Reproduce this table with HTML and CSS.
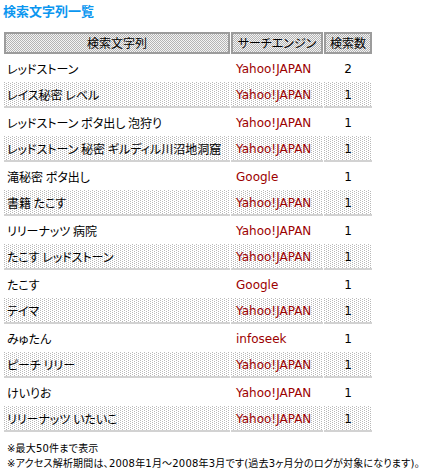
FILE: index.html
```html
<!DOCTYPE html>
<html lang="ja">
<head>
<meta charset="utf-8">
<title>検索文字列一覧</title>
<link rel="stylesheet" href="styles.css">
</head>
<body>
<h1 class="title">検索文字列一覧</h1>
<table class="kw">
  <colgroup>
    <col class="c-word"><col class="c-engine"><col class="c-count">
  </colgroup>
  <thead>
    <tr><th>検索文字列</th><th>サーチエンジン</th><th>検索数</th></tr>
  </thead>
  <tbody>
    <tr><td class="word">レッドストーン</td><td class="engine">Yahoo!JAPAN</td><td class="num">2</td></tr>
    <tr class="alt"><td class="word">レイス秘密 レベル</td><td class="engine">Yahoo!JAPAN</td><td class="num">1</td></tr>
    <tr><td class="word">レッドストーン ポタ出し 泡狩り</td><td class="engine">Yahoo!JAPAN</td><td class="num">1</td></tr>
    <tr class="alt"><td class="word">レッドストーン 秘密 ギルディル川沼地洞窟</td><td class="engine">Yahoo!JAPAN</td><td class="num">1</td></tr>
    <tr><td class="word">滝秘密 ポタ出し</td><td class="engine">Google</td><td class="num">1</td></tr>
    <tr class="alt"><td class="word">書籍 たこす</td><td class="engine">Yahoo!JAPAN</td><td class="num">1</td></tr>
    <tr><td class="word">リリーナッツ 病院</td><td class="engine">Yahoo!JAPAN</td><td class="num">1</td></tr>
    <tr class="alt"><td class="word">たこす レッドストーン</td><td class="engine">Yahoo!JAPAN</td><td class="num">1</td></tr>
    <tr><td class="word">たこす</td><td class="engine">Google</td><td class="num">1</td></tr>
    <tr class="alt"><td class="word">テイマ</td><td class="engine">Yahoo!JAPAN</td><td class="num">1</td></tr>
    <tr><td class="word">みゅたん</td><td class="engine">infoseek</td><td class="num">1</td></tr>
    <tr class="alt"><td class="word">ピーチ リリー</td><td class="engine">Yahoo!JAPAN</td><td class="num">1</td></tr>
    <tr><td class="word">けいりお</td><td class="engine">Yahoo!JAPAN</td><td class="num">1</td></tr>
    <tr class="alt"><td class="word">リリーナッツ いたいこ</td><td class="engine">Yahoo!JAPAN</td><td class="num">1</td></tr>
  </tbody>
</table>
<div class="notes">
  <p>※最大50件まで表示</p>
  <p>※アクセス解析期間は、2008年1月～2008年3月です(過去3ヶ月分のログが対象になります)。</p>
</div>
</body>
</html>
```

FILE: styles.css
```css
html, body {
  margin: 0;
  padding: 0;
  background: #fff;
}

body {
  font-family: "DejaVu Sans", "Noto Sans CJK JP", sans-serif;
  font-feature-settings: "palt" 1;
  color: #000;
  font-size: 12px;
}

.title {
  margin: 0;
  padding: 3px 0 0 3px;
  height: 31px;
  box-sizing: border-box;
  font-size: 13px;
  line-height: 16px;
  font-weight: bold;
  color: #0a96f0;
  font-family: "Noto Sans CJK JP", sans-serif;
}

.kw {
  margin-left: 3px;
  border-collapse: separate;
  border-spacing: 1px;
  table-layout: fixed;
  width: 370px;
}

.c-word { width: 226px; }
.c-engine { width: 92px; }
.c-count { width: 48px; }

.kw th {
  height: 22px;
  box-sizing: border-box;
  padding: 0;
  border: 2px solid #9c9c9c;
  font-weight: normal;
  font-size: 12px;
  line-height: 16px;
  text-align: center;
  white-space: nowrap;
  font-family: "Noto Sans CJK JP", sans-serif;
  background-color: #f4f4f4;
  background-image: url("data:image/svg+xml,%3Csvg xmlns='http://www.w3.org/2000/svg' width='2' height='2' shape-rendering='crispEdges'%3E%3Crect width='1' height='1' fill='%23b4b4b4'/%3E%3Crect x='1' y='1' width='1' height='1' fill='%23b4b4b4'/%3E%3C/svg%3E");
  background-size: 2px 2px;
}

.kw td {
  height: 26px;
  box-sizing: border-box;
  padding: 2px 0 0 3px;
  line-height: 16px;
  white-space: nowrap;
  vertical-align: middle;
}

.kw tr.alt td {
  background-color: #ffffff;
  background-image: url("data:image/svg+xml,%3Csvg xmlns='http://www.w3.org/2000/svg' width='4' height='2' shape-rendering='crispEdges'%3E%3Crect width='1' height='1' fill='%23b8b8b8'/%3E%3Crect x='2' y='1' width='1' height='1' fill='%23b8b8b8'/%3E%3C/svg%3E");
  background-size: 4px 2px;
  border-bottom: 2px solid #d2d2d2;
}

.kw td.word {
  font-family: "Noto Sans CJK JP", sans-serif;
}

.kw td.engine {
  padding-left: 5px;
  color: #9c0000;
}

.kw td.num {
  padding-left: 0;
  text-align: center;
}

.notes {
  padding: 8px 0 0 7px;
  font-size: 10px;
  line-height: 15px;
  letter-spacing: 0.2px;
}

.notes p {
  margin: 0;
  white-space: nowrap;
}
```
